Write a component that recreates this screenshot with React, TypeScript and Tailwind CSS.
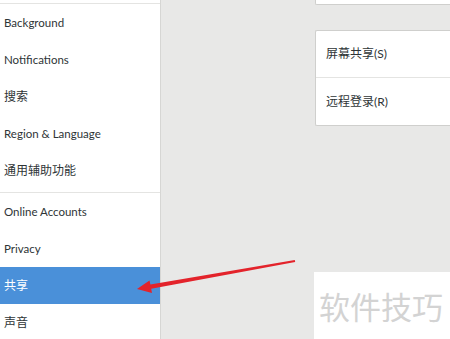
import React from "react";

const font = { fontFamily: '"Lato", "Noto Sans CJK SC", sans-serif' };

function Row({ label, active, cjk }: { label: string; active?: boolean; cjk?: boolean }) {
  return (
    <div
      className={
        "h-[37px] shrink-0 flex items-center pl-[4px] " +
        (cjk ? "text-[12px] " : "text-[11.5px] ") +
        (active ? "bg-[#4a90d9] text-white" : "text-[#2e3436]")
      }
    >
      {label}
    </div>
  );
}

export default function App() {
  return (
    <div className="relative w-[450px] h-[339px] overflow-hidden flex bg-[#e8e8e7]" style={font}>
      <div className="w-[161px] h-[339px] shrink-0 bg-white border-r border-[#d6d6d4] flex flex-col overflow-hidden">
        <div className="h-[3px] shrink-0" />
        <div className="shrink-0 border-t border-[#e4e4e2]" />
        <Row label="Background" />
        <Row label="Notifications" />
        <Row label="搜索" cjk />
        <Row label="Region & Language" />
        <Row label="通用辅助功能" cjk />
        <div className="h-[3px] shrink-0" />
        <div className="shrink-0 border-t border-[#e4e4e2]" />
        <Row label="Online Accounts" />
        <Row label="Privacy" />
        <Row label="共享" active cjk />
        <Row label="声音" cjk />
      </div>
      <div className="flex-1 flex flex-col pl-[154px]">
        <div className="h-[5px] bg-white border-l border-b border-[#cfcfcd] rounded-bl-[2px]" />
        <div className="h-[25px]" />
        <div className="bg-white border-l border-t border-b border-[#cfcfcd] rounded-l-[2px] text-[#2e3436] text-[12px]">
          <div className="h-[47px] flex items-center pl-[10px] border-b border-[#e4e4e2]">屏幕共享(S)</div>
          <div className="h-[47px] flex items-center pl-[10px]">远程登录(R)</div>
        </div>
        <div className="flex-1" />
        <div className="h-[67px] -ml-[1px] bg-white flex items-center pl-[5px] pt-[4px] text-[31px] text-[#d3d3d3] leading-none">
          软件技巧
        </div>
      </div>
      <svg className="absolute left-0 top-0" width="450" height="339" viewBox="0 0 450 339">
        <polygon
          points="137,289 152,293 151.2,288.7 295.2,261.9 294.8,260.1 150.4,284.4 149.5,280.5"
          fill="#e3232b"
        />
      </svg>
    </div>
  );
}
